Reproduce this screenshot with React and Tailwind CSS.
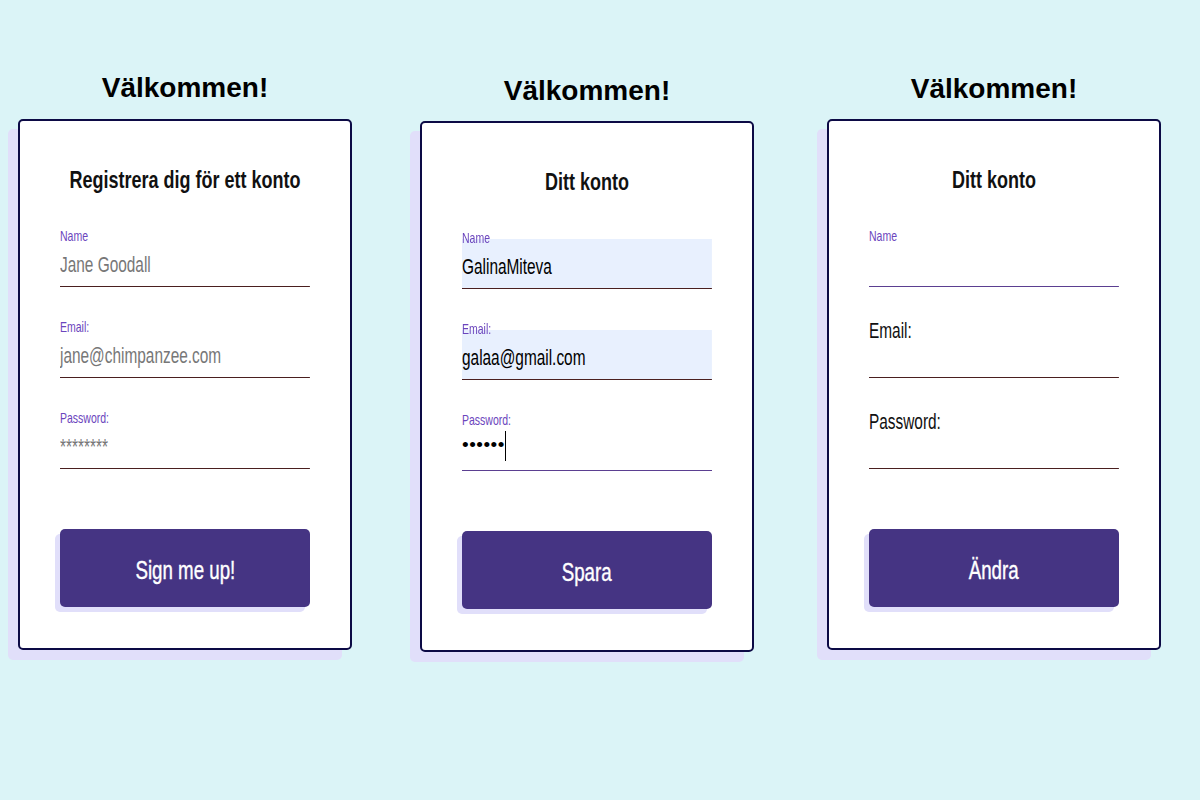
import React from 'react';

// form cards, three states of the same account form
// no condensed face installed, so narrow text is Liberation Sans squeezed on x
const brown = 'border-[#4a1f1f]';
const violet = 'border-[#5b3f91]';

function Label({ text, big }) {
  if (big) {
    return (
      <label className="relative z-10 -mb-[13px] block h-[20px] text-[22px] leading-[20px] text-[#111]">
        {text}
      </label>
    );
  }
  return (
    <label className="relative z-10 -mb-[5px] block h-[12px] text-[15px] leading-[12px] text-[#6b45bd]">
      {text}
    </label>
  );
}

function Field({ label, big, value, placeholder, filled, line = brown }) {
  return (
    <div className="flex w-[357px] origin-left scale-x-[0.7] flex-col">
      <Label text={label} big={big} />
      <input
        readOnly
        value={value || ''}
        placeholder={placeholder}
        className={`h-[50px] w-full border-b pt-[7px] text-[22px] text-black outline-none placeholder:text-[#777] ${line} ${filled ? 'bg-[#e8f0fe]' : 'bg-transparent'}`}
      />
    </div>
  );
}

function Dots() {
  return (
    <div className="flex flex-col">
      <div className="origin-left scale-x-[0.7]">
        <Label text="Password:" />
      </div>
      <div className={`flex h-[50px] w-full items-center border-b ${violet}`}>
        <span className="text-[19px] tracking-[0.5px] text-black">••••••</span>
        <span className="h-[30px] w-px bg-black" />
      </div>
    </div>
  );
}

function Card({ title, children, button }) {
  return (
    <div className="flex h-[531px] w-[334px] flex-col rounded-[5px] border-2 border-[#0c0a45] bg-white px-[40px] pt-[45px] shadow-[-10px_10px_0_0_#e1dffa]">
      <h2 className="mb-[36px] flex justify-center text-[24px] leading-[28px] font-bold text-[#111]">
        <span className="inline-block scale-x-[0.75] whitespace-nowrap">{title}</span>
      </h2>
      <div className="flex flex-col gap-[34px]">{children}</div>
      <button className="mt-[60px] flex h-[78px] w-full items-center justify-center rounded-[5px] bg-[#453483] pt-[5px] text-[26px] text-white shadow-[-5px_5px_0_0_#e1dffa]">
        <span className="inline-block scale-x-[0.72] whitespace-nowrap [-webkit-text-stroke:0.4px_white]">{button}</span>
      </button>
    </div>
  );
}

function Column({ className, children }) {
  return (
    <div className={`flex flex-col items-center ${className}`}>
      <h1 className="text-[28px] leading-[32px] font-bold text-black">Välkommen!</h1>
      {children}
    </div>
  );
}

export default function App() {
  return (
    <div className="min-h-screen w-full bg-[#dbf4f7] font-['Liberation_Sans',Arial,sans-serif]">
      <div className="flex items-start pl-[18px]">
        <Column className="mt-[72px] gap-[15px]">
          <Card title="Registrera dig för ett konto" button="Sign me up!">
            <Field label="Name" placeholder="Jane Goodall" />
            <Field label="Email:" placeholder="jane@chimpanzee.com" />
            <Field label="Password:" placeholder="********" />
          </Card>
        </Column>

        <Column className="ml-[68px] mt-[75px] gap-[14px]">
          <Card title="Ditt konto" button="Spara">
            <Field label="Name" value="GalinaMiteva" filled />
            <Field label="Email:" value="galaa@gmail.com" filled />
            <Dots />
          </Card>
        </Column>

        <Column className="ml-[73px] mt-[73px] gap-[14px]">
          <Card title="Ditt konto" button="Ändra">
            <Field label="Name" line={violet} />
            <Field label="Email:" big />
            <Field label="Password:" big />
          </Card>
        </Column>
      </div>
    </div>
  );
}
